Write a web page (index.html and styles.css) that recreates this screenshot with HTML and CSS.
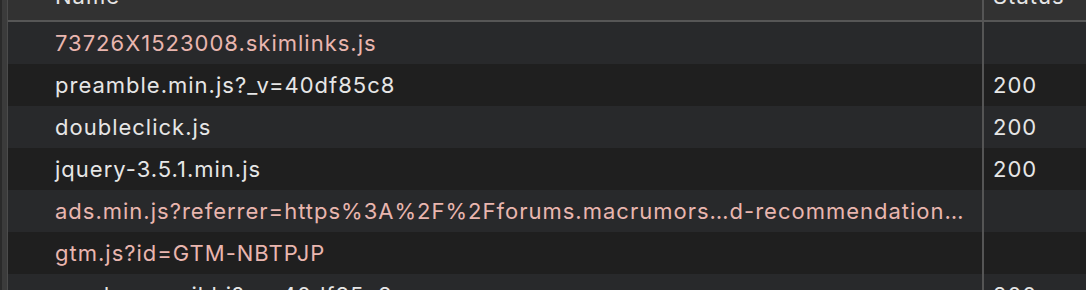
FILE: index.html
```html
<!DOCTYPE html>
<html>
<head>
<meta charset="utf-8">
<link rel="stylesheet" href="styles.css">
</head>
<body>
<div class="panel">
  <div class="gutter"></div>
  <div class="table">
    <div class="row head">
      <div class="cell name"><span class="htext">Name</span></div>
      <div class="cell status"><span class="htext">Status</span></div>
    </div>
    <div class="row light">
      <div class="cell name err">73726X1523008.skimlinks.js</div>
      <div class="cell status"></div>
    </div>
    <div class="row dark">
      <div class="cell name">preamble.min.js?_v=40df85c8</div>
      <div class="cell status">200</div>
    </div>
    <div class="row light">
      <div class="cell name">doubleclick.js</div>
      <div class="cell status">200</div>
    </div>
    <div class="row dark">
      <div class="cell name">jquery-3.5.1.min.js</div>
      <div class="cell status">200</div>
    </div>
    <div class="row light">
      <div class="cell name err">ads.min.js?referrer=https%3A%2F%2Fforums.macrumors…d-recommendation…</div>
      <div class="cell status"></div>
    </div>
    <div class="row dark">
      <div class="cell name err">gtm.js?id=GTM-NBTPJP</div>
      <div class="cell status"></div>
    </div>
    <div class="row light">
      <div class="cell name">vendor-email.bi?_v=40df85c8</div>
      <div class="cell status">200</div>
    </div>
  </div>
</div>
</body>
</html>
```
FILE: styles.css
```css
html, body {
  margin: 0;
  padding: 0;
  background: #1f1f1f;
  overflow: hidden;
}
.panel {
  display: flex;
  width: 1086px;
  height: 290px;
  overflow: hidden;
  font-family: Inter, "Noto Sans", sans-serif;
  font-size: 22px;
  letter-spacing: 1px;
  color: #e6e6e6;
}
.gutter {
  flex: 0 0 5px;
  background: #3b3b3b;
  border-left: 2px solid #2a2a2a;
  border-right: 1px solid #4c4c4c;
}
.table {
  flex: 1;
  display: flex;
  flex-direction: column;
}
.row {
  display: flex;
  flex: 0 0 42px;
  align-items: stretch;
}
.row.head {
  flex: 0 0 20px;
  background: #323232;
  border-bottom: 2px solid #565656;
  overflow: hidden;
}
.row.light { background: #28292b; }
.row.dark { background: #1f1f1f; }
.cell {
  display: flex;
  align-items: center;
  white-space: nowrap;
  overflow: hidden;
}
.cell.name {
  flex: 0 0 976px;
  padding-left: 47px;
  box-sizing: border-box;
  border-right: 2px solid #555555;
}
.cell.status {
  flex: 1;
  padding-left: 9px;
}
.head .cell {
  align-items: flex-start;
}
.htext {
  display: block;
  line-height: 22px;
  margin-top: -15px;
  color: #e6e6e6;
}
.err { color: #e9b6af; }
```
